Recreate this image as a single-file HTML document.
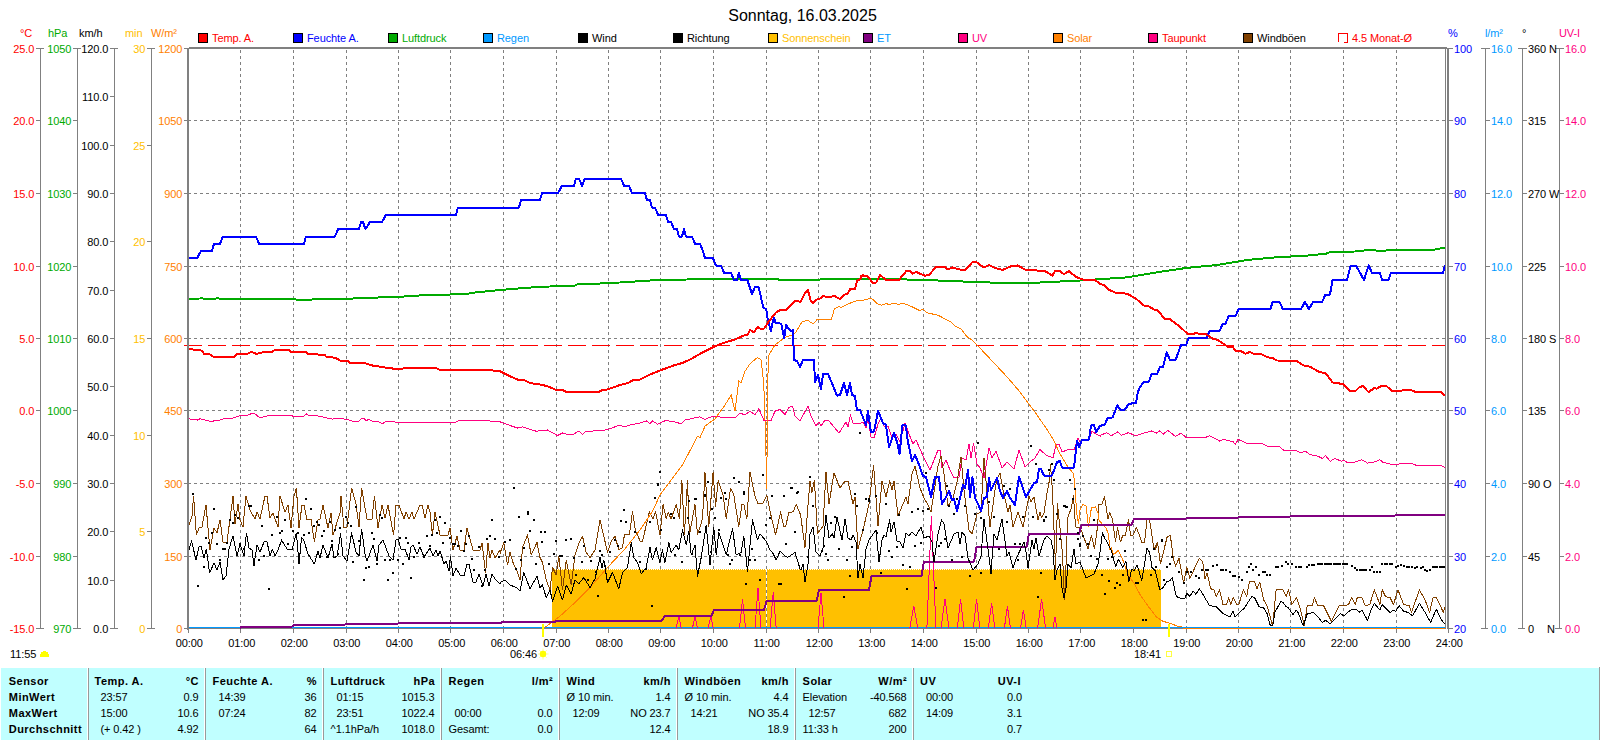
<!DOCTYPE html>
<html lang="de"><head><meta charset="utf-8"><title>Sonntag, 16.03.2025</title>
<style>html,body{margin:0;padding:0;background:#fff;overflow:hidden}svg{display:block}text{font-family:"Liberation Sans",Arial,sans-serif;font-size:11px;white-space:pre;letter-spacing:-0.1px}.h{font-size:16px;letter-spacing:0}.b{font-weight:bold;letter-spacing:0.45px}</style></head><body>
<svg width="1600" height="740" viewBox="0 0 1600 740">
<rect width="1600" height="740" fill="#fff"/>
<g shape-rendering="crispEdges">
<line x1="240.5" y1="50" x2="240.5" y2="628" stroke="#808080" stroke-width="1" stroke-dasharray="3,3"/>
<line x1="293.5" y1="50" x2="293.5" y2="628" stroke="#808080" stroke-width="1" stroke-dasharray="3,3"/>
<line x1="346.5" y1="50" x2="346.5" y2="628" stroke="#808080" stroke-width="1" stroke-dasharray="3,3"/>
<line x1="398.5" y1="50" x2="398.5" y2="628" stroke="#808080" stroke-width="1" stroke-dasharray="3,3"/>
<line x1="450.5" y1="50" x2="450.5" y2="628" stroke="#808080" stroke-width="1" stroke-dasharray="3,3"/>
<line x1="503.5" y1="50" x2="503.5" y2="628" stroke="#808080" stroke-width="1" stroke-dasharray="3,3"/>
<line x1="556.5" y1="50" x2="556.5" y2="628" stroke="#808080" stroke-width="1" stroke-dasharray="3,3"/>
<line x1="608.5" y1="50" x2="608.5" y2="628" stroke="#808080" stroke-width="1" stroke-dasharray="3,3"/>
<line x1="660.5" y1="50" x2="660.5" y2="628" stroke="#808080" stroke-width="1" stroke-dasharray="3,3"/>
<line x1="713.5" y1="50" x2="713.5" y2="628" stroke="#808080" stroke-width="1" stroke-dasharray="3,3"/>
<line x1="766.5" y1="50" x2="766.5" y2="628" stroke="#808080" stroke-width="1" stroke-dasharray="3,3"/>
<line x1="818.5" y1="50" x2="818.5" y2="628" stroke="#808080" stroke-width="1" stroke-dasharray="3,3"/>
<line x1="870.5" y1="50" x2="870.5" y2="628" stroke="#808080" stroke-width="1" stroke-dasharray="3,3"/>
<line x1="923.5" y1="50" x2="923.5" y2="628" stroke="#808080" stroke-width="1" stroke-dasharray="3,3"/>
<line x1="976.5" y1="50" x2="976.5" y2="628" stroke="#808080" stroke-width="1" stroke-dasharray="3,3"/>
<line x1="1028.5" y1="50" x2="1028.5" y2="628" stroke="#808080" stroke-width="1" stroke-dasharray="3,3"/>
<line x1="1080.5" y1="50" x2="1080.5" y2="628" stroke="#808080" stroke-width="1" stroke-dasharray="3,3"/>
<line x1="1133.5" y1="50" x2="1133.5" y2="628" stroke="#808080" stroke-width="1" stroke-dasharray="3,3"/>
<line x1="1186.5" y1="50" x2="1186.5" y2="628" stroke="#808080" stroke-width="1" stroke-dasharray="3,3"/>
<line x1="1238.5" y1="50" x2="1238.5" y2="628" stroke="#808080" stroke-width="1" stroke-dasharray="3,3"/>
<line x1="1290.5" y1="50" x2="1290.5" y2="628" stroke="#808080" stroke-width="1" stroke-dasharray="3,3"/>
<line x1="1343.5" y1="50" x2="1343.5" y2="628" stroke="#808080" stroke-width="1" stroke-dasharray="3,3"/>
<line x1="1396.5" y1="50" x2="1396.5" y2="628" stroke="#808080" stroke-width="1" stroke-dasharray="3,3"/>
<line x1="188" y1="120.5" x2="1445" y2="120.5" stroke="#808080" stroke-width="1" stroke-dasharray="3,3"/>
<line x1="188" y1="193.5" x2="1445" y2="193.5" stroke="#808080" stroke-width="1" stroke-dasharray="3,3"/>
<line x1="188" y1="266.5" x2="1445" y2="266.5" stroke="#808080" stroke-width="1" stroke-dasharray="3,3"/>
<line x1="188" y1="338.5" x2="1445" y2="338.5" stroke="#808080" stroke-width="1" stroke-dasharray="3,3"/>
<line x1="188" y1="410.5" x2="1445" y2="410.5" stroke="#808080" stroke-width="1" stroke-dasharray="3,3"/>
<line x1="188" y1="483.5" x2="1445" y2="483.5" stroke="#808080" stroke-width="1" stroke-dasharray="3,3"/>
<line x1="188" y1="556.5" x2="1445" y2="556.5" stroke="#808080" stroke-width="1" stroke-dasharray="3,3"/>
</g>
<g shape-rendering="crispEdges">
<rect x="552" y="570" width="214" height="58" fill="#FFC000"/>
<rect x="767" y="570" width="394" height="58" fill="#FFC000"/>
<line x1="552" y1="569.5" x2="766" y2="569.5" stroke="#FFC000" stroke-width="1" stroke-dasharray="1,1"/>
<line x1="767" y1="569.5" x2="1161" y2="569.5" stroke="#FFC000" stroke-width="1" stroke-dasharray="1,1"/>
</g>
<line x1="184" y1="345.5" x2="1445" y2="345.5" stroke="#FF0000" stroke-width="1" stroke-dasharray="18,6" shape-rendering="crispEdges"/>
<rect x="189" y="628" width="1257" height="1" fill="#808080"/>
<rect x="188" y="627" width="1258" height="1" fill="#0099FF"/>
<rect x="1183" y="628" width="263" height="1" fill="#FF8000"/>
<polyline points="188.8,418.8 197.5,420.0 200.0,418.8 212.5,421.8 215.0,420.0 220.0,420.0 225.0,418.2 232.5,418.2 240.0,415.8 246.2,415.8 252.5,413.2 255.0,413.8 260.0,418.0 265.0,416.2 272.5,415.5 291.2,415.5 293.8,416.5 303.8,416.2 306.8,413.8 308.8,415.5 317.5,415.8 325.0,417.5 332.5,419.2 336.2,418.2 346.2,419.2 352.5,421.2 358.8,421.2 361.2,418.8 363.8,418.2 366.2,420.8 368.8,419.2 372.5,421.2 378.8,422.0 382.5,423.8 386.2,421.2 400.0,422.5 400.0,422.0 437.5,422.0 440.0,423.0 455.0,422.5 458.8,420.8 487.5,420.8 500.0,421.8 510.0,425.5 517.5,428.0 522.5,426.8 530.0,429.5 536.2,431.2 547.5,430.0 557.5,435.5 562.5,433.0 567.5,434.5 573.8,434.0 578.8,431.2 582.5,434.2 586.2,431.2 600.0,430.8 607.5,429.5 620.0,425.0 623.8,427.0 630.0,425.0 640.0,423.0 646.2,420.8 650.0,423.8 652.5,420.8 657.5,424.2 665.0,420.8 672.5,421.2 681.2,423.8 685.0,420.0 700.0,416.8 705.0,419.5 712.5,416.2 725.0,417.5 735.0,418.0 740.0,413.0 745.0,415.0 750.0,411.2 755.0,415.0 758.8,408.8 763.8,420.0 771.2,420.0 775.0,411.2 780.0,409.5 785.0,414.5 788.8,407.5 792.5,406.2 795.0,416.0 800.0,421.0 808.0,406.0 811.0,416.0 816.0,426.0 819.0,422.0 821.0,426.0 825.0,420.0 829.0,421.0 839.0,433.0 846.0,422.0 848.0,427.0 850.4,415.0 853.0,423.0 860.0,423.6 863.0,422.0 866.0,427.6 868.0,418.0 871.0,437.0 874.0,438.0 878.0,424.0 881.0,418.0 884.0,426.0 888.0,426.0 892.0,438.0 896.0,434.0 900.0,442.0 905.0,423.0 909.0,434.0 913.0,444.0 916.0,440.0 924.0,458.0 930.0,470.0 938.0,450.0 940.0,450.0 942.0,468.0 946.0,460.0 950.0,470.0 954.0,478.0 959.0,477.0 962.0,458.0 966.0,460.0 969.0,444.0 971.0,458.0 973.6,443.0 977.0,464.0 980.0,468.0 984.0,478.0 989.0,448.0 992.0,458.0 996.0,451.0 1002.0,468.0 1007.0,462.0 1014.0,469.0 1019.0,450.0 1025.0,467.0 1030.0,462.0 1035.0,458.0 1040.0,449.6 1046.0,455.0 1053.0,458.0 1056.0,445.0 1059.0,444.0 1062.0,452.0 1068.0,449.6 1074.0,449.6 1078.0,438.0 1080.0,442.0 1083.0,439.0 1089.0,439.6 1092.0,431.0 1096.0,434.0 1100.0,436.0 1100.0,435.4 1106.8,432.7 1111.3,435.8 1117.6,432.0 1121.4,435.4 1128.2,432.7 1136.1,435.8 1145.1,432.7 1151.9,430.9 1156.4,433.1 1159.8,430.9 1163.2,434.2 1167.7,430.4 1175.6,436.5 1180.8,433.1 1185.8,437.2 1206.1,437.2 1209.5,435.8 1219.6,441.0 1223.0,439.4 1233.2,441.7 1235.4,444.4 1238.1,439.4 1246.7,443.3 1262.5,443.7 1267.0,446.2 1279.5,446.7 1284.0,450.5 1296.4,450.5 1300.9,453.0 1305.4,451.2 1309.9,454.6 1316.7,455.7 1322.3,458.4 1325.7,455.7 1330.2,461.3 1334.8,458.4 1341.5,461.3 1343.8,460.2 1347.2,462.5 1355.1,462.0 1361.9,459.8 1367.5,463.1 1374.3,462.0 1379.9,459.8 1383.3,462.5 1393.5,464.7 1402.5,463.6 1411.5,463.6 1416.0,465.2 1427.3,465.8 1434.1,465.2 1440.9,465.4 1445.4,467.7" fill="none" stroke="#FF0080" stroke-width="1" shape-rendering="crispEdges" />
<polyline points="188.0,528.0 192.0,516.0 193.6,496.0 196.4,535.0 199.0,528.0 202.0,527.0 206.0,505.0 210.0,550.0 214.0,528.0 217.0,533.0 220.0,520.0 223.0,542.0 227.0,542.0 233.0,496.0 235.0,524.0 238.0,504.0 240.0,520.0 243.0,527.0 246.0,496.0 250.0,510.0 255.0,519.0 257.0,512.0 260.0,519.0 265.0,496.0 267.0,496.0 270.0,518.0 273.0,513.0 278.0,527.0 280.0,496.0 285.0,512.0 288.0,505.0 291.0,528.0 294.0,496.0 296.4,488.0 299.0,528.0 302.0,505.0 304.0,505.0 307.0,520.0 311.0,519.0 314.4,542.0 318.0,520.0 320.0,519.0 323.0,505.0 328.0,528.0 331.0,513.0 333.0,535.0 340.0,513.0 341.0,496.0 344.0,528.0 347.0,527.0 351.6,488.0 356.0,504.0 359.0,527.0 361.6,488.0 367.0,519.0 372.0,519.0 374.4,496.0 378.0,528.0 382.0,505.0 385.0,518.0 388.0,505.0 393.6,535.0 396.0,505.0 399.0,505.0 404.0,519.0 406.0,512.0 409.0,519.0 412.0,512.0 414.0,519.0 420.0,505.0 422.0,505.0 425.0,518.0 428.0,505.0 430.0,512.0 432.4,535.0 435.0,512.0 440.0,535.0 448.0,535.0 450.0,528.0 453.0,550.0 457.0,536.0 460.0,550.0 464.0,550.0 467.0,528.0 473.0,550.0 480.0,550.0 482.0,543.0 485.6,573.0 488.0,543.0 490.0,558.0 492.0,550.0 495.0,558.0 500.0,550.0 500.0,553.8 503.8,542.5 507.5,565.0 510.0,552.5 513.8,565.0 516.2,568.8 520.0,580.0 522.5,547.5 527.5,535.0 531.2,555.0 537.0,542.5 540.0,557.5 542.5,562.5 546.2,580.0 550.0,590.0 552.5,567.5 556.2,575.0 558.8,556.2 562.5,590.0 566.2,560.0 571.2,585.0 575.0,555.0 578.8,543.8 582.5,536.2 586.2,552.5 590.0,557.5 595.0,550.0 600.0,520.0 603.8,536.2 607.5,552.5 611.2,541.2 615.0,536.2 618.8,550.0 622.5,547.5 624.4,535.0 629.4,534.4 632.5,511.9 635.6,531.2 640.6,541.9 642.5,541.2 649.4,511.9 653.1,518.8 655.6,511.9 660.0,535.0 663.1,504.4 666.2,518.8 668.1,512.5 671.2,518.8 676.2,504.4 679.4,518.8 681.9,480.6 684.4,535.0 687.5,480.6 689.4,535.0 695.0,504.4 697.5,535.0 702.5,518.8 705.0,472.5 708.8,526.9 713.1,471.9 715.6,506.2 718.1,480.6 723.1,495.0 726.2,518.8 730.6,488.1 733.8,495.0 738.8,526.9 741.9,504.4 743.8,504.4 746.9,518.8 750.0,472.5 755.0,496.2 758.1,503.8 762.5,503.8 766.9,495.6 770.0,511.2 775.6,535.0 780.6,511.9 783.8,526.9 785.6,526.9 788.8,512.5 793.1,511.9 796.2,504.4 800.6,515.0 805.0,547.5 807.5,511.2 810.0,480.6 811.9,492.5 814.4,480.6 817.5,533.8 823.0,526.0 826.0,472.0 829.0,504.0 834.0,473.0 840.0,488.0 845.0,481.0 848.0,481.0 853.0,504.0 855.0,497.0 858.0,549.0 864.0,526.0 869.0,504.0 873.6,465.0 878.0,526.0 882.0,481.0 886.0,497.0 889.6,481.0 892.0,490.0 894.0,481.0 898.0,516.0 903.0,504.0 906.0,497.0 908.0,504.0 912.0,474.0 915.0,466.0 920.0,488.0 924.0,498.0 928.0,505.0 931.0,512.0 938.0,466.0 941.0,456.0 944.0,474.0 948.0,506.0 953.0,498.0 957.0,482.0 961.0,457.0 964.0,490.0 969.0,530.0 972.0,534.0 977.0,514.0 981.0,512.0 984.0,458.0 990.0,527.0 995.0,490.0 997.0,479.0 1000.0,473.0 1003.0,490.0 1008.0,512.0 1010.0,505.0 1013.0,527.0 1018.0,512.0 1023.0,527.0 1029.0,496.0 1031.0,502.0 1034.0,497.0 1038.0,520.0 1040.0,512.0 1041.5,518.0 1044.0,513.0 1047.0,493.0 1049.5,480.0 1050.5,465.0 1052.0,485.0 1053.0,505.0 1055.0,554.0 1055.5,570.0 1057.5,504.0 1060.0,528.0 1062.5,554.0 1064.5,600.0 1066.5,554.0 1067.5,518.0 1071.0,509.0 1073.5,496.0 1075.5,527.0 1079.0,527.5 1082.0,532.0 1088.0,549.0 1091.5,535.5 1094.5,549.0 1097.5,527.0 1099.0,504.5 1102.0,504.0 1104.5,496.5 1108.0,519.0 1109.5,512.5 1112.5,519.0 1115.5,542.0 1117.5,527.5 1120.5,542.0 1122.5,536.0 1125.5,535.0 1128.5,519.5 1130.5,535.0 1133.0,535.0 1136.5,527.5 1142.0,542.5 1144.5,542.5 1147.0,519.5 1149.5,519.5 1154.0,549.0 1157.5,542.5 1155.3,549.2 1157.6,543.5 1160.5,563.9 1167.3,536.3 1170.4,535.6 1173.4,559.3 1175.6,566.1 1179.0,558.2 1183.5,583.0 1186.9,567.2 1189.8,578.5 1199.3,558.2 1202.7,561.6 1205.0,578.5 1207.2,572.9 1210.6,588.7 1214.0,589.8 1216.3,596.6 1219.6,589.8 1223.0,604.5 1226.4,604.5 1228.7,597.7 1230.9,604.5 1233.2,597.7 1236.6,604.5 1238.8,604.5 1243.3,589.8 1246.7,596.6 1249.4,581.9 1254.6,581.9 1256.9,588.7 1259.8,582.4 1263.7,600.0 1267.0,605.6 1272.7,625.9 1276.1,589.8 1282.8,589.8 1286.2,596.6 1288.5,589.8 1291.9,604.5 1296.4,597.7 1299.8,606.7 1304.3,625.9 1307.2,605.6 1312.2,605.6 1314.4,597.7 1317.8,605.6 1323.5,605.6 1331.4,621.4 1339.3,605.6 1348.3,604.9 1351.7,597.7 1355.1,604.5 1357.3,597.7 1361.9,597.7 1365.2,605.6 1369.8,604.5 1374.3,589.8 1379.9,604.5 1382.2,589.8 1385.6,596.6 1390.1,597.7 1393.5,604.5 1398.0,589.8 1403.6,604.5 1409.3,605.6 1411.5,612.4 1419.4,589.8 1425.1,600.0 1429.6,612.4 1433.0,597.7 1436.3,597.3 1440.9,606.7 1443.1,612.4 1445.4,605.6" fill="none" stroke="#804000" stroke-width="1" shape-rendering="crispEdges" stroke-linejoin="round"/>
<polyline points="543.0,628.0 546.0,626.5 548.8,624.5 560.0,616.2 575.0,602.5 590.0,587.5 607.5,567.5 625.0,548.8 640.0,530.0 652.5,511.2 660.0,495.0 682.5,465.0 697.5,436.2 700.0,437.5 705.0,426.2 715.0,418.8 725.0,405.0 731.2,395.0 735.0,411.2 738.8,381.2 741.2,382.5 745.0,371.2 750.0,363.8 757.5,357.5 761.2,360.0 763.8,385.0 765.5,435.0 766.8,488.8 767.5,385.0 768.8,355.0 775.0,345.0 785.0,337.5 792.7,334.6 795.5,332.7 802.1,321.7 807.8,320.4 813.1,323.8 817.3,319.4 831.5,319.1 834.3,309.0 839.0,306.2 840.9,307.7 849.4,303.4 857.0,300.5 860.8,300.9 870.2,298.3 873.1,299.6 876.8,303.4 881.6,305.3 886.3,303.4 889.1,304.7 892.9,303.4 898.6,304.3 903.3,303.4 909.9,305.8 919.4,310.4 923.2,309.6 927.0,312.8 938.3,315.3 945.9,319.4 951.6,322.3 955.3,326.1 961.0,328.9 966.7,336.5 972.4,340.2 977.1,345.0 977.0,345.0 995.0,364.0 1008.0,378.0 1020.0,392.0 1037.0,415.0 1046.0,428.0 1053.0,439.0 1060.0,454.0 1068.0,467.0 1073.0,473.0 1074.5,480.0 1075.0,490.0 1077.0,515.0 1078.5,524.0 1080.0,510.0 1083.0,504.5 1086.0,506.0 1088.5,526.5 1091.5,507.5 1095.5,507.0 1098.0,513.0 1099.0,520.0 1102.0,524.0 1106.0,528.0 1108.5,534.0 1110.0,550.0 1111.3,548.1 1113.5,554.8 1118.1,550.3 1122.6,559.3 1128.2,575.1 1133.9,583.0 1140.6,595.5 1148.5,606.7 1156.4,616.9 1163.2,621.4 1170.0,623.2 1176.7,625.9 1182.4,627.1" fill="none" stroke="#FF8000" stroke-width="1" shape-rendering="crispEdges" />
<polyline points="676.2,628 678.8,616 681.2,628" fill="none" stroke="#FF0080" stroke-width="1" shape-rendering="crispEdges"/>
<polyline points="692.5,628 695.0,616 697.5,628" fill="none" stroke="#FF0080" stroke-width="1" shape-rendering="crispEdges"/>
<polyline points="708.2,628 710.8,616 713.2,628" fill="none" stroke="#FF0080" stroke-width="1" shape-rendering="crispEdges"/>
<polyline points="739.5,628 742.5,599.5 745.5,628" fill="none" stroke="#FF0080" stroke-width="1" shape-rendering="crispEdges"/>
<polyline points="755.0,628 758.0,588 761.0,628" fill="none" stroke="#FF0080" stroke-width="1" shape-rendering="crispEdges"/>
<polyline points="770.2,628 773.2,592.5 776.2,628" fill="none" stroke="#FF0080" stroke-width="1" shape-rendering="crispEdges"/>
<polyline points="818.0,628 821.0,593 824.0,628" fill="none" stroke="#FF0080" stroke-width="1" shape-rendering="crispEdges"/>
<polyline points="909.8,628 913.8,606 917.8,628" fill="none" stroke="#FF0080" stroke-width="1" shape-rendering="crispEdges"/>
<polyline points="926.9,628 931.4,516 935.9,628" fill="none" stroke="#FF0080" stroke-width="1" shape-rendering="crispEdges"/>
<polyline points="941.0,628 945.0,599 949.0,628" fill="none" stroke="#FF0080" stroke-width="1" shape-rendering="crispEdges"/>
<polyline points="957.4,628 960.6,599 963.8,628" fill="none" stroke="#FF0080" stroke-width="1" shape-rendering="crispEdges"/>
<polyline points="973.4,628 976.6,599 979.8,628" fill="none" stroke="#FF0080" stroke-width="1" shape-rendering="crispEdges"/>
<polyline points="988.4,628 991.6,603 994.8,628" fill="none" stroke="#FF0080" stroke-width="1" shape-rendering="crispEdges"/>
<polyline points="1004.4,628 1007.4,606 1010.4,628" fill="none" stroke="#FF0080" stroke-width="1" shape-rendering="crispEdges"/>
<polyline points="1020.6,628 1023.4,610 1026.2,628" fill="none" stroke="#FF0080" stroke-width="1" shape-rendering="crispEdges"/>
<polyline points="1037.6,628 1041.6,599 1045.6,628" fill="none" stroke="#FF0080" stroke-width="1" shape-rendering="crispEdges"/>
<polyline points="1053.0,628 1055.0,617 1057.0,628" fill="none" stroke="#FF0080" stroke-width="1" shape-rendering="crispEdges"/>
<polyline points="240.0,628.0 241.5,626.8 291.5,626.8 294.0,625.0 344.0,625.0 346.5,623.8 396.5,623.8 399.0,623.4 449.0,623.4 451.5,622.5 501.5,622.5 504.0,622.0 554.0,622.0 556.5,621.2 606.5,621.2 609.0,620.5 662.0,620.5 664.5,616.2 711.5,616.2 714.0,610.0 764.0,610.0 766.5,601.2 816.5,601.2 819.0,590.0 869.0,590.0 871.5,576.0 921.5,576.0 924.0,561.6 974.0,561.6 976.5,547.4 1026.5,547.4 1029.0,533.8 1079.0,533.8 1081.5,525.2 1131.5,525.2 1134.0,519.0 1184.0,519.0 1186.5,518.3 1236.5,518.3 1239.0,517.0 1289.0,517.0 1291.5,516.0 1341.5,516.0 1344.0,516.0 1394.0,516.0 1396.5,515.0 1446.0,515.0" fill="none" stroke="#800080" stroke-width="2" shape-rendering="crispEdges" stroke-linejoin="round"/>
<polyline points="188.0,553.0 191.6,541.0 196.0,560.0 199.0,547.0 201.0,546.0 204.0,558.0 206.4,549.0 209.6,573.0 214.0,563.0 217.0,570.0 220.0,562.0 223.0,580.0 226.0,576.0 229.0,549.0 233.0,536.0 237.0,556.0 240.0,544.0 244.0,556.0 246.4,533.0 249.0,548.0 252.0,550.0 254.0,565.0 257.0,545.0 260.0,552.0 264.0,542.0 267.0,541.6 270.0,556.0 272.4,549.0 275.0,556.0 278.0,550.0 281.6,540.0 287.0,549.0 292.0,550.0 296.4,533.0 299.0,564.0 301.6,537.0 304.0,541.0 308.0,554.0 314.4,564.0 318.0,551.0 320.0,558.0 323.0,545.0 328.0,558.0 332.0,544.0 334.0,558.0 337.0,556.0 340.6,534.0 343.0,556.0 347.0,561.0 351.6,533.0 356.0,552.0 359.0,556.0 361.6,529.0 365.0,554.0 367.0,561.0 373.0,545.0 377.0,561.0 379.0,545.0 383.0,540.0 389.0,556.0 393.0,560.0 396.0,540.0 398.0,539.0 401.0,549.0 405.0,549.0 409.0,560.0 411.0,547.0 413.0,545.0 417.0,554.0 420.0,547.0 424.0,557.0 430.0,548.0 433.0,556.0 436.0,550.0 438.0,556.0 440.0,551.0 444.0,564.0 446.0,561.0 449.0,571.0 450.4,556.0 453.0,576.0 456.0,568.0 460.0,575.0 464.0,576.0 467.0,564.0 469.0,564.0 473.0,582.0 476.0,582.0 479.0,574.0 483.0,586.0 486.0,574.0 489.0,586.0 492.0,574.0 495.0,579.0 500.0,584.0 500.0,582.5 505.0,580.0 510.0,585.0 516.2,587.5 520.0,591.2 523.8,572.5 530.0,588.8 537.0,576.2 540.0,587.5 542.5,585.0 546.2,597.5 550.0,590.0 552.5,601.2 557.5,586.2 562.5,600.0 566.2,585.0 571.2,593.8 575.0,580.0 578.8,583.8 583.8,577.5 590.0,587.5 595.0,578.8 600.0,557.5 602.0,567.5 603.8,560.0 607.5,582.5 612.5,572.5 618.8,588.8 622.5,572.5 627.5,567.5 631.2,542.5 633.8,557.5 637.5,562.5 641.2,573.8 646.2,567.5 650.0,547.5 652.5,560.0 656.2,547.5 660.0,562.5 662.5,550.0 665.0,562.5 668.8,542.5 671.2,552.5 676.2,545.0 678.8,550.0 682.5,530.0 686.2,545.0 688.8,531.2 691.2,555.0 695.0,545.0 697.5,576.2 701.2,557.5 706.2,525.0 710.0,565.0 713.8,527.5 716.2,555.0 718.8,532.5 726.2,555.0 732.5,528.8 736.2,555.0 741.2,552.5 743.8,536.2 747.5,571.2 752.5,520.0 757.5,540.0 760.0,533.8 766.2,541.2 770.0,550.0 772.5,552.5 776.2,560.0 780.0,551.2 783.8,555.0 787.5,557.5 795.0,552.5 800.0,568.8 801.0,570.0 803.0,564.0 805.0,582.0 808.0,564.0 810.0,534.0 813.0,527.0 816.0,552.0 820.0,556.0 823.0,548.0 826.0,515.0 829.0,538.0 832.4,534.0 834.0,538.0 837.0,517.0 842.0,540.0 845.0,519.0 848.0,538.0 851.0,540.0 853.0,535.0 856.0,542.0 858.0,578.0 860.0,564.0 863.0,578.0 866.0,549.0 869.0,540.0 876.0,530.0 879.0,562.0 882.0,540.0 884.0,535.0 886.0,537.0 889.6,520.0 891.0,532.0 894.0,522.0 897.0,541.0 900.0,542.0 903.0,548.0 906.0,533.0 909.0,536.0 912.0,532.0 916.0,536.0 921.0,527.0 924.0,538.0 929.0,536.0 932.0,542.0 934.0,562.0 938.0,534.0 941.6,520.0 944.0,524.0 948.0,548.0 954.0,534.0 958.0,532.0 960.0,544.0 962.0,532.0 965.0,536.0 968.0,558.0 973.0,570.0 978.0,564.0 981.0,556.0 984.0,519.0 991.0,572.0 994.0,534.0 997.0,540.0 1002.0,519.0 1007.0,556.0 1009.0,552.0 1013.0,568.0 1016.0,559.0 1024.0,542.0 1026.0,552.0 1028.0,568.0 1032.0,540.0 1034.0,549.0 1036.0,538.0 1039.0,556.0 1044.0,540.0 1047.0,536.0 1051.0,540.0 1053.0,549.0 1055.0,580.0 1057.0,570.0 1060.0,564.0 1062.0,588.0 1064.0,598.0 1066.0,588.0 1068.0,564.0 1071.0,568.0 1074.0,549.0 1076.0,564.0 1080.0,562.0 1086.0,578.0 1094.0,574.0 1098.0,564.0 1100.0,552.0 1102.5,532.5 1105.0,539.0 1106.8,541.3 1111.3,550.3 1113.5,559.3 1115.8,566.1 1118.5,559.3 1122.6,567.2 1126.0,561.6 1128.9,581.9 1131.6,569.5 1133.9,570.6 1137.2,565.0 1141.8,580.8 1147.0,548.1 1149.7,552.6 1151.9,567.2 1155.3,570.6 1159.8,589.8 1163.2,587.6 1166.6,581.9 1170.0,580.8 1172.2,577.4 1175.6,594.3 1177.9,597.7 1184.7,598.8 1186.9,593.2 1189.8,596.6 1193.0,590.9 1195.9,594.3 1199.3,588.7 1201.6,592.1 1209.5,605.6 1216.3,606.7 1223.0,613.5 1229.8,616.9 1233.2,611.3 1235.0,616.9 1244.5,607.9 1251.7,596.6 1254.6,597.7 1259.1,606.7 1263.7,607.9 1267.0,613.5 1270.4,625.9 1272.7,625.9 1274.9,612.4 1280.6,601.8 1282.8,602.2 1286.2,606.7 1288.5,607.9 1293.0,614.7 1296.4,610.1 1298.6,613.5 1303.2,625.9 1307.2,614.0 1313.3,612.4 1319.0,618.0 1322.3,622.6 1325.7,620.3 1330.2,623.7 1340.4,613.5 1343.8,615.8 1350.6,610.1 1356.2,609.0 1359.1,612.4 1361.9,610.1 1367.5,620.3 1370.9,610.1 1374.3,603.4 1379.9,610.1 1382.2,604.5 1390.1,612.4 1393.5,610.1 1395.7,611.3 1399.1,605.6 1403.6,611.3 1408.1,612.4 1412.6,615.8 1419.4,603.4 1425.1,612.4 1430.7,622.6 1436.3,609.0 1440.9,619.2 1445.4,624.8" fill="none" stroke="#000" stroke-width="1" shape-rendering="crispEdges" stroke-linejoin="round"/>
<g fill="#000" shape-rendering="crispEdges"><rect x="192" y="493" width="2" height="2"/><rect x="213" y="508" width="2" height="2"/><rect x="197" y="585" width="2" height="2"/><rect x="203" y="566" width="2" height="2"/><rect x="205" y="537" width="2" height="2"/><rect x="208" y="542" width="2" height="2"/><rect x="211" y="532" width="2" height="2"/><rect x="216" y="543" width="2" height="2"/><rect x="219" y="559" width="2" height="2"/><rect x="222" y="548" width="2" height="2"/><rect x="224" y="548" width="2" height="2"/><rect x="226" y="542" width="2" height="2"/><rect x="229" y="519" width="2" height="2"/><rect x="232" y="522" width="2" height="2"/><rect x="234" y="514" width="2" height="2"/><rect x="237" y="517" width="2" height="2"/><rect x="239" y="543" width="2" height="2"/><rect x="243" y="548" width="2" height="2"/><rect x="248" y="505" width="2" height="2"/><rect x="250" y="505" width="2" height="2"/><rect x="253" y="564" width="2" height="2"/><rect x="258" y="559" width="2" height="2"/><rect x="261" y="525" width="2" height="2"/><rect x="263" y="555" width="2" height="2"/><rect x="268" y="588" width="2" height="2"/><rect x="271" y="534" width="2" height="2"/><rect x="276" y="516" width="2" height="2"/><rect x="279" y="532" width="2" height="2"/><rect x="281" y="530" width="2" height="2"/><rect x="284" y="519" width="2" height="2"/><rect x="287" y="543" width="2" height="2"/><rect x="292" y="530" width="2" height="2"/><rect x="297" y="532" width="2" height="2"/><rect x="303" y="534" width="2" height="2"/><rect x="305" y="498" width="2" height="2"/><rect x="308" y="532" width="2" height="2"/><rect x="310" y="508" width="2" height="2"/><rect x="313" y="525" width="2" height="2"/><rect x="316" y="521" width="2" height="2"/><rect x="318" y="524" width="2" height="2"/><rect x="321" y="535" width="2" height="2"/><rect x="323" y="530" width="2" height="2"/><rect x="326" y="556" width="2" height="2"/><rect x="329" y="521" width="2" height="2"/><rect x="331" y="540" width="2" height="2"/><rect x="334" y="529" width="2" height="2"/><rect x="337" y="553" width="2" height="2"/><rect x="339" y="527" width="2" height="2"/><rect x="345" y="516" width="2" height="2"/><rect x="347" y="522" width="2" height="2"/><rect x="350" y="525" width="2" height="2"/><rect x="352" y="561" width="2" height="2"/><rect x="355" y="506" width="2" height="2"/><rect x="358" y="540" width="2" height="2"/><rect x="361" y="532" width="2" height="2"/><rect x="363" y="579" width="2" height="2"/><rect x="365" y="567" width="2" height="2"/><rect x="368" y="566" width="2" height="2"/><rect x="371" y="532" width="2" height="2"/><rect x="373" y="538" width="2" height="2"/><rect x="376" y="563" width="2" height="2"/><rect x="379" y="514" width="2" height="2"/><rect x="381" y="517" width="2" height="2"/><rect x="384" y="559" width="2" height="2"/><rect x="387" y="579" width="2" height="2"/><rect x="389" y="559" width="2" height="2"/><rect x="392" y="572" width="2" height="2"/><rect x="397" y="559" width="2" height="2"/><rect x="399" y="537" width="2" height="2"/><rect x="402" y="563" width="2" height="2"/><rect x="405" y="537" width="2" height="2"/><rect x="407" y="542" width="2" height="2"/><rect x="410" y="577" width="2" height="2"/><rect x="413" y="556" width="2" height="2"/><rect x="418" y="542" width="2" height="2"/><rect x="423" y="556" width="2" height="2"/><rect x="426" y="535" width="2" height="2"/><rect x="429" y="545" width="2" height="2"/><rect x="431" y="534" width="2" height="2"/><rect x="434" y="519" width="2" height="2"/><rect x="436" y="532" width="2" height="2"/><rect x="439" y="516" width="2" height="2"/><rect x="442" y="542" width="2" height="2"/><rect x="444" y="522" width="2" height="2"/><rect x="449" y="537" width="2" height="2"/><rect x="452" y="543" width="2" height="2"/><rect x="454" y="543" width="2" height="2"/><rect x="457" y="545" width="2" height="2"/><rect x="460" y="530" width="2" height="2"/><rect x="463" y="550" width="2" height="2"/><rect x="465" y="543" width="2" height="2"/><rect x="468" y="535" width="2" height="2"/><rect x="471" y="558" width="2" height="2"/><rect x="473" y="569" width="2" height="2"/><rect x="478" y="546" width="2" height="2"/><rect x="481" y="585" width="2" height="2"/><rect x="484" y="569" width="2" height="2"/><rect x="486" y="538" width="2" height="2"/><rect x="489" y="535" width="2" height="2"/><rect x="491" y="519" width="2" height="2"/><rect x="494" y="538" width="2" height="2"/><rect x="498" y="556" width="2" height="2"/><rect x="504" y="541" width="2" height="2"/><rect x="509" y="539" width="2" height="2"/><rect x="513" y="487" width="2" height="2"/><rect x="515" y="568" width="2" height="2"/><rect x="518" y="516" width="2" height="2"/><rect x="520" y="559" width="2" height="2"/><rect x="523" y="547" width="2" height="2"/><rect x="527" y="511" width="2" height="2"/><rect x="529" y="530" width="2" height="2"/><rect x="533" y="519" width="2" height="2"/><rect x="535" y="563" width="2" height="2"/><rect x="540" y="531" width="2" height="2"/><rect x="541" y="541" width="2" height="2"/><rect x="544" y="531" width="2" height="2"/><rect x="548" y="563" width="2" height="2"/><rect x="553" y="553" width="2" height="2"/><rect x="555" y="540" width="2" height="2"/><rect x="559" y="555" width="2" height="2"/><rect x="561" y="555" width="2" height="2"/><rect x="565" y="539" width="2" height="2"/><rect x="570" y="538" width="2" height="2"/><rect x="573" y="557" width="2" height="2"/><rect x="575" y="574" width="2" height="2"/><rect x="581" y="561" width="2" height="2"/><rect x="583" y="545" width="2" height="2"/><rect x="587" y="579" width="2" height="2"/><rect x="590" y="560" width="2" height="2"/><rect x="595" y="571" width="2" height="2"/><rect x="597" y="595" width="2" height="2"/><rect x="599" y="550" width="2" height="2"/><rect x="601" y="554" width="2" height="2"/><rect x="604" y="565" width="2" height="2"/><rect x="609" y="551" width="2" height="2"/><rect x="614" y="539" width="2" height="2"/><rect x="617" y="545" width="2" height="2"/><rect x="620" y="520" width="2" height="2"/><rect x="623" y="509" width="2" height="2"/><rect x="625" y="521" width="2" height="2"/><rect x="634" y="531" width="2" height="2"/><rect x="639" y="561" width="2" height="2"/><rect x="645" y="568" width="2" height="2"/><rect x="649" y="521" width="2" height="2"/><rect x="651" y="605" width="2" height="2"/><rect x="654" y="497" width="2" height="2"/><rect x="657" y="483" width="2" height="2"/><rect x="660" y="529" width="2" height="2"/><rect x="670" y="513" width="2" height="2"/><rect x="673" y="517" width="2" height="2"/><rect x="674" y="554" width="2" height="2"/><rect x="681" y="561" width="2" height="2"/><rect x="687" y="517" width="2" height="2"/><rect x="691" y="553" width="2" height="2"/><rect x="695" y="498" width="2" height="2"/><rect x="699" y="531" width="2" height="2"/><rect x="704" y="494" width="2" height="2"/><rect x="707" y="481" width="2" height="2"/><rect x="710" y="551" width="2" height="2"/><rect x="714" y="517" width="2" height="2"/><rect x="718" y="529" width="2" height="2"/><rect x="720" y="497" width="2" height="2"/><rect x="725" y="498" width="2" height="2"/><rect x="727" y="554" width="2" height="2"/><rect x="729" y="563" width="2" height="2"/><rect x="731" y="559" width="2" height="2"/><rect x="738" y="481" width="2" height="2"/><rect x="739" y="554" width="2" height="2"/><rect x="743" y="491" width="2" height="2"/><rect x="745" y="583" width="2" height="2"/><rect x="749" y="559" width="2" height="2"/><rect x="751" y="548" width="2" height="2"/><rect x="754" y="559" width="2" height="2"/><rect x="759" y="579" width="2" height="2"/><rect x="765" y="524" width="2" height="2"/><rect x="769" y="517" width="2" height="2"/><rect x="771" y="495" width="2" height="2"/><rect x="778" y="583" width="2" height="2"/><rect x="780" y="583" width="2" height="2"/><rect x="785" y="543" width="2" height="2"/><rect x="790" y="487" width="2" height="2"/><rect x="794" y="531" width="2" height="2"/><rect x="797" y="491" width="2" height="2"/><rect x="659" y="471" width="2" height="2"/><rect x="657" y="484" width="2" height="2"/><rect x="654" y="497" width="2" height="2"/><rect x="623" y="509" width="2" height="2"/><rect x="513" y="487" width="2" height="2"/><rect x="527" y="513" width="2" height="2"/><rect x="518" y="516" width="2" height="2"/><rect x="439" y="516" width="2" height="2"/><rect x="733" y="477" width="2" height="2"/><rect x="738" y="481" width="2" height="2"/><rect x="762" y="474" width="2" height="2"/><rect x="724" y="492" width="2" height="2"/><rect x="743" y="493" width="2" height="2"/><rect x="704" y="495" width="2" height="2"/><rect x="694" y="498" width="2" height="2"/><rect x="688" y="500" width="2" height="2"/><rect x="720" y="497" width="2" height="2"/><rect x="711" y="508" width="2" height="2"/><rect x="771" y="495" width="2" height="2"/><rect x="783" y="495" width="2" height="2"/><rect x="791" y="487" width="2" height="2"/><rect x="796" y="492" width="2" height="2"/><rect x="807" y="556" width="2" height="2"/><rect x="809" y="476" width="2" height="2"/><rect x="812" y="505" width="2" height="2"/><rect x="821" y="550" width="2" height="2"/><rect x="823" y="545" width="2" height="2"/><rect x="825" y="553" width="2" height="2"/><rect x="827" y="559" width="2" height="2"/><rect x="830" y="522" width="2" height="2"/><rect x="834" y="516" width="2" height="2"/><rect x="838" y="548" width="2" height="2"/><rect x="846" y="559" width="2" height="2"/><rect x="851" y="546" width="2" height="2"/><rect x="854" y="493" width="2" height="2"/><rect x="856" y="505" width="2" height="2"/><rect x="862" y="529" width="2" height="2"/><rect x="865" y="498" width="2" height="2"/><rect x="868" y="498" width="2" height="2"/><rect x="868" y="500" width="2" height="2"/><rect x="875" y="495" width="2" height="2"/><rect x="876" y="532" width="2" height="2"/><rect x="880" y="572" width="2" height="2"/><rect x="885" y="503" width="2" height="2"/><rect x="888" y="550" width="2" height="2"/><rect x="891" y="556" width="2" height="2"/><rect x="896" y="546" width="2" height="2"/><rect x="898" y="514" width="2" height="2"/><rect x="902" y="564" width="2" height="2"/><rect x="909" y="566" width="2" height="2"/><rect x="911" y="511" width="2" height="2"/><rect x="914" y="545" width="2" height="2"/><rect x="917" y="508" width="2" height="2"/><rect x="920" y="542" width="2" height="2"/><rect x="922" y="510" width="2" height="2"/><rect x="925" y="472" width="2" height="2"/><rect x="927" y="508" width="2" height="2"/><rect x="935" y="587" width="2" height="2"/><rect x="938" y="545" width="2" height="2"/><rect x="940" y="542" width="2" height="2"/><rect x="944" y="538" width="2" height="2"/><rect x="946" y="485" width="2" height="2"/><rect x="948" y="505" width="2" height="2"/><rect x="951" y="559" width="2" height="2"/><rect x="953" y="513" width="2" height="2"/><rect x="956" y="498" width="2" height="2"/><rect x="961" y="556" width="2" height="2"/><rect x="964" y="505" width="2" height="2"/><rect x="969" y="575" width="2" height="2"/><rect x="974" y="513" width="2" height="2"/><rect x="977" y="442" width="2" height="2"/><rect x="980" y="517" width="2" height="2"/><rect x="980" y="572" width="2" height="2"/><rect x="988" y="501" width="2" height="2"/><rect x="990" y="571" width="2" height="2"/><rect x="993" y="516" width="2" height="2"/><rect x="998" y="548" width="2" height="2"/><rect x="1003" y="485" width="2" height="2"/><rect x="1006" y="521" width="2" height="2"/><rect x="1009" y="488" width="2" height="2"/><rect x="1014" y="543" width="2" height="2"/><rect x="1017" y="559" width="2" height="2"/><rect x="1019" y="543" width="2" height="2"/><rect x="1022" y="516" width="2" height="2"/><rect x="1030" y="445" width="2" height="2"/><rect x="1032" y="516" width="2" height="2"/><rect x="1035" y="463" width="2" height="2"/><rect x="780" y="583" width="2" height="2"/><rect x="843" y="596" width="2" height="2"/><rect x="849" y="575" width="2" height="2"/><rect x="880" y="572" width="2" height="2"/><rect x="906" y="588" width="2" height="2"/><rect x="935" y="587" width="2" height="2"/><rect x="969" y="575" width="2" height="2"/><rect x="980" y="572" width="2" height="2"/><rect x="990" y="572" width="2" height="2"/><rect x="1037" y="596" width="2" height="2"/><rect x="1040" y="572" width="2" height="2"/><rect x="859" y="432" width="2" height="2"/><rect x="977" y="442" width="2" height="2"/><rect x="1030" y="445" width="2" height="2"/><rect x="1035" y="463" width="2" height="2"/><rect x="1048" y="469" width="2" height="2"/><rect x="1051" y="463" width="2" height="2"/><rect x="925" y="472" width="2" height="2"/><rect x="809" y="476" width="2" height="2"/><rect x="1043" y="519" width="2" height="2"/><rect x="1045" y="516" width="2" height="2"/><rect x="1053" y="479" width="2" height="2"/><rect x="1056" y="513" width="2" height="2"/><rect x="1059" y="538" width="2" height="2"/><rect x="1063" y="505" width="2" height="2"/><rect x="1065" y="506" width="2" height="2"/><rect x="1069" y="479" width="2" height="2"/><rect x="1072" y="498" width="2" height="2"/><rect x="1074" y="488" width="2" height="2"/><rect x="1077" y="538" width="2" height="2"/><rect x="1079" y="545" width="2" height="2"/><rect x="1082" y="535" width="2" height="2"/><rect x="1087" y="543" width="2" height="2"/><rect x="1093" y="519" width="2" height="2"/><rect x="1124" y="550" width="2" height="2"/><rect x="1153" y="548" width="2" height="2"/><rect x="1161" y="540" width="2" height="2"/><rect x="1040" y="572" width="2" height="2"/><rect x="1043" y="520" width="2" height="2"/><rect x="1045" y="516" width="2" height="2"/><rect x="1048" y="469" width="2" height="2"/><rect x="1051" y="463" width="2" height="2"/><rect x="1053" y="479" width="2" height="2"/><rect x="1056" y="513" width="2" height="2"/><rect x="1059" y="538" width="2" height="2"/><rect x="1064" y="505" width="2" height="2"/><rect x="1066" y="506" width="2" height="2"/><rect x="1069" y="479" width="2" height="2"/><rect x="1074" y="488" width="2" height="2"/><rect x="1077" y="532" width="2" height="2"/><rect x="1079" y="543" width="2" height="2"/><rect x="1082" y="535" width="2" height="2"/><rect x="1087" y="543" width="2" height="2"/><rect x="1090" y="555" width="2" height="2"/><rect x="1093" y="519" width="2" height="2"/><rect x="1096" y="558" width="2" height="2"/><rect x="1101" y="574" width="2" height="2"/><rect x="1107" y="558" width="2" height="2"/><rect x="1111" y="556" width="2" height="2"/><rect x="1108" y="580" width="2" height="2"/><rect x="1114" y="587" width="2" height="2"/><rect x="1116" y="582" width="2" height="2"/><rect x="1119" y="584" width="2" height="2"/><rect x="1122" y="574" width="2" height="2"/><rect x="1124" y="550" width="2" height="2"/><rect x="1135" y="582" width="2" height="2"/><rect x="1137" y="582" width="2" height="2"/><rect x="1150" y="574" width="2" height="2"/><rect x="1155" y="566" width="2" height="2"/><rect x="1104" y="593" width="2" height="2"/><rect x="1142" y="619" width="2" height="2"/><rect x="1145" y="619" width="2" height="2"/><rect x="1161" y="539" width="2" height="2"/><rect x="1171" y="556" width="2" height="2"/><rect x="1169" y="563" width="2" height="2"/><rect x="1166" y="566" width="2" height="2"/><rect x="1163" y="579" width="2" height="2"/><rect x="1178" y="571" width="2" height="2"/><rect x="1183" y="582" width="2" height="2"/><rect x="1186" y="571" width="2" height="2"/><rect x="1190" y="571" width="2" height="2"/><rect x="1195" y="575" width="2" height="2"/><rect x="1198" y="577" width="2" height="2"/><rect x="1201" y="569" width="2" height="2"/><rect x="1205" y="569" width="2" height="2"/><rect x="1207" y="569" width="2" height="2"/><rect x="1212" y="565" width="2" height="2"/><rect x="1216" y="564" width="2" height="2"/><rect x="1220" y="569" width="2" height="2"/><rect x="1222" y="569" width="2" height="2"/><rect x="1225" y="569" width="2" height="2"/><rect x="1229" y="571" width="2" height="2"/><rect x="1232" y="575" width="2" height="2"/><rect x="1234" y="575" width="2" height="2"/><rect x="1238" y="576" width="2" height="2"/><rect x="1241" y="579" width="2" height="2"/><rect x="1246" y="571" width="2" height="2"/><rect x="1248" y="566" width="2" height="2"/><rect x="1250" y="563" width="2" height="2"/><rect x="1252" y="569" width="2" height="2"/><rect x="1255" y="566" width="2" height="2"/><rect x="1258" y="574" width="2" height="2"/><rect x="1262" y="571" width="2" height="2"/><rect x="1264" y="571" width="2" height="2"/><rect x="1266" y="574" width="2" height="2"/><rect x="1269" y="574" width="2" height="2"/><rect x="1275" y="566" width="2" height="2"/><rect x="1277" y="566" width="2" height="2"/><rect x="1281" y="565" width="2" height="2"/><rect x="1285" y="561" width="2" height="2"/><rect x="1287" y="563" width="2" height="2"/><rect x="1291" y="563" width="2" height="2"/><rect x="1295" y="566" width="2" height="2"/><rect x="1298" y="566" width="2" height="2"/><rect x="1300" y="566" width="2" height="2"/><rect x="1306" y="566" width="2" height="2"/><rect x="1308" y="564" width="2" height="2"/><rect x="1311" y="564" width="2" height="2"/><rect x="1313" y="564" width="2" height="2"/><rect x="1317" y="563" width="2" height="2"/><rect x="1319" y="563" width="2" height="2"/><rect x="1321" y="563" width="2" height="2"/><rect x="1324" y="563" width="2" height="2"/><rect x="1326" y="563" width="2" height="2"/><rect x="1328" y="563" width="2" height="2"/><rect x="1330" y="563" width="2" height="2"/><rect x="1333" y="563" width="2" height="2"/><rect x="1335" y="563" width="2" height="2"/><rect x="1337" y="563" width="2" height="2"/><rect x="1339" y="563" width="2" height="2"/><rect x="1342" y="563" width="2" height="2"/><rect x="1344" y="563" width="2" height="2"/><rect x="1346" y="563" width="2" height="2"/><rect x="1351" y="565" width="2" height="2"/><rect x="1354" y="567" width="2" height="2"/><rect x="1356" y="569" width="2" height="2"/><rect x="1359" y="569" width="2" height="2"/><rect x="1361" y="569" width="2" height="2"/><rect x="1363" y="569" width="2" height="2"/><rect x="1365" y="569" width="2" height="2"/><rect x="1369" y="569" width="2" height="2"/><rect x="1371" y="566" width="2" height="2"/><rect x="1373" y="571" width="2" height="2"/><rect x="1376" y="571" width="2" height="2"/><rect x="1379" y="571" width="2" height="2"/><rect x="1381" y="563" width="2" height="2"/><rect x="1384" y="563" width="2" height="2"/><rect x="1386" y="563" width="2" height="2"/><rect x="1389" y="563" width="2" height="2"/><rect x="1391" y="563" width="2" height="2"/><rect x="1395" y="566" width="2" height="2"/><rect x="1397" y="565" width="2" height="2"/><rect x="1400" y="564" width="2" height="2"/><rect x="1403" y="565" width="2" height="2"/><rect x="1406" y="566" width="2" height="2"/><rect x="1408" y="566" width="2" height="2"/><rect x="1411" y="566" width="2" height="2"/><rect x="1414" y="567" width="2" height="2"/><rect x="1416" y="566" width="2" height="2"/><rect x="1420" y="567" width="2" height="2"/><rect x="1422" y="566" width="2" height="2"/><rect x="1424" y="569" width="2" height="2"/><rect x="1426" y="570" width="2" height="2"/><rect x="1429" y="569" width="2" height="2"/><rect x="1432" y="566" width="2" height="2"/><rect x="1434" y="566" width="2" height="2"/><rect x="1436" y="566" width="2" height="2"/><rect x="1439" y="566" width="2" height="2"/><rect x="1441" y="566" width="2" height="2"/><rect x="1443" y="566" width="2" height="2"/></g>
<polyline points="188.0,298.8 200.0,298.5 201.0,297.8 203.0,298.6 216.0,298.6 217.0,297.8 219.0,298.6 250.0,298.8 256.0,299.5 260.0,298.8 280.0,298.8 284.0,299.5 290.0,298.6 296.0,299.5 312.0,299.5 316.0,298.8 346.0,298.6 362.0,298.4 375.0,297.6 400.0,296.8 419.0,295.5 450.0,294.5 468.0,294.0 470.0,293.0 500.0,290.0 537.0,287.0 575.0,285.5 577.0,284.5 612.0,283.0 650.0,280.5 687.0,279.5 690.0,279.0 750.0,279.2 753.0,278.6 776.0,278.8 780.0,280.0 800.0,280.3 825.0,279.3 900.0,279.3 925.0,280.0 975.0,282.0 1005.0,283.0 1030.0,283.0 1050.0,282.0 1075.0,280.8 1100.0,279.2 1127.0,277.4 1160.0,271.8 1186.0,268.0 1217.0,265.0 1247.0,260.0 1280.0,257.0 1303.0,256.0 1326.0,253.7 1330.0,252.0 1360.0,251.4 1366.0,250.0 1382.0,250.8 1393.0,250.0 1432.0,250.0 1445.0,247.6" fill="none" stroke="#00AA00" stroke-width="2" shape-rendering="crispEdges" stroke-linejoin="round"/>
<polyline points="188.0,258.2 197.0,258.2 201.0,251.0 212.0,251.0 214.0,243.8 220.0,243.8 223.0,236.5 256.0,236.5 259.0,243.8 304.0,243.8 306.0,236.5 335.0,236.5 338.0,229.2 359.0,229.2 361.0,222.0 363.0,222.0 365.5,229.2 370.0,222.0 382.0,222.0 386.0,214.8 456.0,214.8 458.0,207.5 519.0,207.5 521.0,200.2 540.0,200.2 542.0,193.0 558.0,193.0 562.0,185.8 574.0,185.8 576.0,178.5 579.0,178.5 582.0,185.8 585.0,178.5 621.0,178.5 624.0,185.8 629.0,185.8 632.0,193.0 645.0,193.0 647.0,200.2 650.0,200.2 652.0,207.5 655.0,207.5 658.0,214.8 666.0,214.8 668.0,222.0 671.0,222.0 674.0,229.2 677.0,229.2 679.0,236.5 682.0,236.5 684.0,229.2 686.0,236.5 692.0,236.5 695.0,243.8 700.0,243.8 703.0,251.0 705.0,258.2 713.0,258.2 716.0,265.5 721.0,265.5 724.0,272.8 731.0,272.8 734.0,280.0 737.0,280.0 739.0,272.8 741.0,280.0 747.0,280.0 747.3,279.7 752.0,293.9 754.9,287.3 758.6,286.9 763.4,308.1 766.2,309.0 767.7,319.4 770.9,330.8 773.8,317.5 775.7,323.2 781.3,323.6 784.2,338.4 786.1,325.1 790.8,331.2 792.7,331.7 793.0,330.0 794.0,360.0 797.0,361.0 800.0,367.0 803.0,360.0 814.0,360.0 815.0,382.0 818.0,375.0 821.0,389.0 823.0,374.0 828.0,373.6 837.0,395.6 840.0,395.0 844.0,383.0 847.0,395.0 850.0,383.0 852.0,395.0 855.0,396.0 857.0,410.0 860.0,410.0 866.0,425.0 868.0,411.0 871.0,432.0 874.0,431.6 878.0,411.0 883.0,423.0 886.0,425.0 889.0,447.0 894.0,433.0 897.0,442.0 899.6,454.0 902.4,425.0 905.6,425.0 908.0,442.0 912.0,461.0 915.0,455.0 918.0,462.0 923.0,476.0 926.0,477.0 931.0,497.0 935.0,477.0 939.0,477.0 942.0,504.0 946.0,497.0 949.0,491.0 952.0,500.0 954.0,499.0 957.0,511.0 960.0,498.0 963.0,485.0 965.0,488.0 968.0,470.0 970.0,497.0 972.4,477.0 975.0,498.0 978.0,504.0 981.0,511.0 984.0,498.0 987.0,497.0 989.0,478.0 991.0,490.0 997.0,478.0 1000.0,491.0 1003.0,498.0 1007.0,491.0 1010.0,498.0 1015.0,505.0 1019.0,477.0 1026.0,497.0 1030.0,490.0 1034.0,483.0 1037.0,482.0 1039.0,469.0 1041.0,469.0 1044.0,475.6 1052.0,475.6 1057.0,462.0 1060.0,461.0 1062.0,467.6 1074.0,467.6 1077.0,441.0 1079.0,447.0 1082.0,440.0 1089.0,439.6 1091.0,425.6 1094.0,425.0 1096.0,432.0 1100.0,426.0 1105.0,424.5 1107.5,418.0 1112.5,417.5 1117.5,405.0 1120.0,409.5 1125.0,409.5 1128.8,403.8 1136.2,403.0 1137.0,396.0 1139.0,388.8 1144.0,381.5 1149.0,381.5 1151.5,374.2 1157.0,374.2 1160.0,367.0 1163.0,367.0 1166.6,352.5 1170.0,359.8 1175.6,359.8 1181.0,345.2 1186.0,345.2 1188.5,338.0 1207.0,338.0 1209.5,330.8 1219.6,330.8 1223.0,323.5 1225.5,323.5 1228.7,316.2 1235.4,316.2 1238.8,309.0 1270.4,309.0 1272.7,301.8 1279.5,301.8 1282.8,309.0 1301.0,309.0 1305.0,301.8 1308.8,309.0 1313.3,301.8 1322.3,301.8 1325.3,294.5 1330.0,294.5 1332.5,280.0 1347.0,280.0 1350.6,265.5 1356.0,265.5 1364.0,280.0 1368.6,265.5 1372.0,272.8 1380.0,272.8 1382.0,280.0 1388.5,280.0 1391.0,272.8 1443.0,272.8 1445.0,265.5" fill="none" stroke="#0000FF" stroke-width="2" shape-rendering="crispEdges" stroke-linejoin="round"/>
<polyline points="188.5,348.8 196.0,350.0 201.6,350.6 204.1,353.8 209.1,353.8 213.5,356.9 234.1,356.9 236.6,354.4 246.0,354.4 251.0,351.9 254.8,353.1 256.0,353.8 260.4,353.1 263.5,351.9 272.2,351.9 274.1,350.4 289.8,350.4 291.0,351.9 306.0,351.9 307.9,353.8 317.2,353.8 318.5,355.0 324.8,355.0 326.0,356.5 331.0,356.9 335.4,358.1 338.5,359.4 340.0,360.5 347.5,360.8 350.0,363.0 365.0,363.2 372.5,365.5 385.0,367.5 400.0,369.5 405.0,368.0 436.2,368.0 440.0,370.0 487.5,370.0 500.0,371.2 510.0,376.2 517.5,379.5 525.0,380.5 530.0,383.0 540.0,384.5 547.5,386.2 555.0,389.5 562.5,390.0 566.2,391.8 598.8,391.8 602.5,390.0 607.5,389.5 620.0,385.0 627.5,383.2 632.5,380.5 640.0,379.5 650.0,374.5 660.0,370.5 675.0,365.0 682.5,363.0 690.0,359.5 702.5,352.5 715.0,346.2 725.0,342.5 735.0,339.5 745.0,335.0 747.3,335.5 750.1,329.8 753.9,332.3 757.7,327.0 760.5,328.9 764.3,328.5 768.1,322.3 775.7,312.8 779.4,310.4 786.1,310.0 794.6,301.5 798.4,300.9 800.2,302.4 805.0,293.0 807.8,289.6 810.6,300.5 813.1,303.0 816.3,299.6 819.2,299.2 822.9,296.2 825.8,296.7 835.2,296.4 840.0,299.0 844.7,294.5 847.5,293.9 850.4,288.8 855.1,288.8 857.0,280.7 859.8,279.3 863.0,275.0 861.2,276.2 867.5,276.2 872.5,282.5 876.2,282.5 880.0,275.0 886.2,280.0 898.8,280.0 906.2,271.2 910.0,271.2 912.5,273.8 916.2,272.0 925.0,275.8 928.8,275.0 936.2,267.0 945.0,267.0 947.5,269.5 952.5,267.5 960.0,269.5 965.0,270.0 972.5,262.0 976.2,262.0 983.8,267.5 988.8,265.0 995.0,268.0 1002.5,270.0 1011.2,266.2 1017.5,265.5 1025.0,269.5 1045.0,271.2 1052.5,275.5 1055.0,271.2 1060.0,271.2 1063.8,274.2 1068.8,271.2 1076.2,277.0 1082.5,279.5 1095.0,280.0 1100.0,283.7 1104.5,285.3 1109.0,289.8 1115.8,292.8 1127.1,293.7 1136.1,298.8 1144.0,305.6 1148.5,306.3 1154.2,309.5 1157.6,310.1 1164.3,318.5 1170.0,319.2 1179.0,325.9 1187.6,333.8 1197.1,333.4 1206.1,334.3 1212.9,338.8 1217.4,339.9 1228.7,347.4 1233.2,347.4 1235.4,350.8 1241.1,351.4 1245.6,353.7 1250.1,351.9 1253.5,353.7 1261.4,354.2 1267.0,357.1 1272.7,358.2 1277.2,360.5 1296.4,360.9 1303.2,365.4 1309.9,366.6 1319.0,371.8 1325.7,373.3 1332.5,382.4 1342.7,384.0 1350.6,391.4 1355.1,391.4 1359.6,386.9 1363.0,386.2 1368.6,392.1 1374.3,388.0 1376.5,388.7 1381.0,386.2 1386.7,386.2 1392.3,391.4 1398.0,391.4 1402.5,390.3 1411.5,390.3 1416.0,392.1 1429.6,392.5 1434.1,391.9 1440.9,391.9 1445.4,395.9" fill="none" stroke="#FF0000" stroke-width="2" shape-rendering="crispEdges" stroke-linejoin="round"/>
<g shape-rendering="crispEdges">
<rect x="189" y="47" width="1258" height="2" fill="#808080"/>
<rect x="187" y="48" width="2" height="582" fill="#808080"/>
<rect x="1445" y="48" width="1" height="581" fill="#808080"/>
<rect x="1447" y="48" width="2" height="581" fill="#808080"/>
<rect x="40" y="48" width="1" height="581" fill="#808080"/>
<rect x="36" y="48" width="8" height="1" fill="#808080"/>
<rect x="36" y="120" width="4" height="1" fill="#808080"/>
<rect x="36" y="193" width="4" height="1" fill="#808080"/>
<rect x="36" y="266" width="4" height="1" fill="#808080"/>
<rect x="36" y="338" width="4" height="1" fill="#808080"/>
<rect x="36" y="410" width="4" height="1" fill="#808080"/>
<rect x="36" y="483" width="4" height="1" fill="#808080"/>
<rect x="36" y="556" width="4" height="1" fill="#808080"/>
<rect x="36" y="628" width="8" height="1" fill="#808080"/>
<rect x="77" y="48" width="1" height="581" fill="#808080"/>
<rect x="73" y="48" width="8" height="1" fill="#808080"/>
<rect x="73" y="120" width="4" height="1" fill="#808080"/>
<rect x="73" y="193" width="4" height="1" fill="#808080"/>
<rect x="73" y="266" width="4" height="1" fill="#808080"/>
<rect x="73" y="338" width="4" height="1" fill="#808080"/>
<rect x="73" y="410" width="4" height="1" fill="#808080"/>
<rect x="73" y="483" width="4" height="1" fill="#808080"/>
<rect x="73" y="556" width="4" height="1" fill="#808080"/>
<rect x="73" y="628" width="8" height="1" fill="#808080"/>
<rect x="114" y="48" width="1" height="581" fill="#808080"/>
<rect x="110" y="48" width="8" height="1" fill="#808080"/>
<rect x="110" y="96" width="4" height="1" fill="#808080"/>
<rect x="110" y="145" width="4" height="1" fill="#808080"/>
<rect x="110" y="193" width="4" height="1" fill="#808080"/>
<rect x="110" y="241" width="4" height="1" fill="#808080"/>
<rect x="110" y="290" width="4" height="1" fill="#808080"/>
<rect x="110" y="338" width="4" height="1" fill="#808080"/>
<rect x="110" y="386" width="4" height="1" fill="#808080"/>
<rect x="110" y="435" width="4" height="1" fill="#808080"/>
<rect x="110" y="483" width="4" height="1" fill="#808080"/>
<rect x="110" y="531" width="4" height="1" fill="#808080"/>
<rect x="110" y="580" width="4" height="1" fill="#808080"/>
<rect x="110" y="628" width="8" height="1" fill="#808080"/>
<rect x="151" y="48" width="1" height="581" fill="#808080"/>
<rect x="147" y="48" width="8" height="1" fill="#808080"/>
<rect x="147" y="145" width="4" height="1" fill="#808080"/>
<rect x="147" y="241" width="4" height="1" fill="#808080"/>
<rect x="147" y="338" width="4" height="1" fill="#808080"/>
<rect x="147" y="435" width="4" height="1" fill="#808080"/>
<rect x="147" y="531" width="4" height="1" fill="#808080"/>
<rect x="147" y="628" width="8" height="1" fill="#808080"/>
<rect x="184" y="48" width="3" height="1" fill="#808080"/>
<rect x="184" y="120" width="3" height="1" fill="#808080"/>
<rect x="184" y="193" width="3" height="1" fill="#808080"/>
<rect x="184" y="266" width="3" height="1" fill="#808080"/>
<rect x="184" y="338" width="3" height="1" fill="#808080"/>
<rect x="184" y="410" width="3" height="1" fill="#808080"/>
<rect x="184" y="483" width="3" height="1" fill="#808080"/>
<rect x="184" y="556" width="3" height="1" fill="#808080"/>
<rect x="184" y="628" width="3" height="1" fill="#808080"/>
<rect x="1449" y="48" width="4" height="1" fill="#808080"/>
<rect x="1449" y="120" width="4" height="1" fill="#808080"/>
<rect x="1449" y="193" width="4" height="1" fill="#808080"/>
<rect x="1449" y="266" width="4" height="1" fill="#808080"/>
<rect x="1449" y="338" width="4" height="1" fill="#808080"/>
<rect x="1449" y="410" width="4" height="1" fill="#808080"/>
<rect x="1449" y="483" width="4" height="1" fill="#808080"/>
<rect x="1449" y="556" width="4" height="1" fill="#808080"/>
<rect x="1449" y="628" width="4" height="1" fill="#808080"/>
<rect x="1485" y="48" width="1" height="581" fill="#808080"/>
<rect x="1481" y="48" width="9" height="1" fill="#808080"/>
<rect x="1485" y="120" width="5" height="1" fill="#808080"/>
<rect x="1485" y="193" width="5" height="1" fill="#808080"/>
<rect x="1485" y="266" width="5" height="1" fill="#808080"/>
<rect x="1485" y="338" width="5" height="1" fill="#808080"/>
<rect x="1485" y="410" width="5" height="1" fill="#808080"/>
<rect x="1485" y="483" width="5" height="1" fill="#808080"/>
<rect x="1485" y="556" width="5" height="1" fill="#808080"/>
<rect x="1481" y="628" width="7" height="1" fill="#808080"/>
<rect x="1522" y="48" width="1" height="581" fill="#808080"/>
<rect x="1518" y="48" width="9" height="1" fill="#808080"/>
<rect x="1522" y="120" width="5" height="1" fill="#808080"/>
<rect x="1522" y="193" width="5" height="1" fill="#808080"/>
<rect x="1522" y="266" width="5" height="1" fill="#808080"/>
<rect x="1522" y="338" width="5" height="1" fill="#808080"/>
<rect x="1522" y="410" width="5" height="1" fill="#808080"/>
<rect x="1522" y="483" width="5" height="1" fill="#808080"/>
<rect x="1522" y="556" width="5" height="1" fill="#808080"/>
<rect x="1518" y="628" width="7" height="1" fill="#808080"/>
<rect x="1559" y="48" width="1" height="581" fill="#808080"/>
<rect x="1555" y="48" width="9" height="1" fill="#808080"/>
<rect x="1559" y="120" width="5" height="1" fill="#808080"/>
<rect x="1559" y="193" width="5" height="1" fill="#808080"/>
<rect x="1559" y="266" width="5" height="1" fill="#808080"/>
<rect x="1559" y="338" width="5" height="1" fill="#808080"/>
<rect x="1559" y="410" width="5" height="1" fill="#808080"/>
<rect x="1559" y="483" width="5" height="1" fill="#808080"/>
<rect x="1559" y="556" width="5" height="1" fill="#808080"/>
<rect x="1555" y="628" width="7" height="1" fill="#808080"/>
<rect x="188" y="629" width="1" height="4" fill="#808080"/>
<rect x="240" y="629" width="1" height="4" fill="#808080"/>
<rect x="293" y="629" width="1" height="4" fill="#808080"/>
<rect x="346" y="629" width="1" height="4" fill="#808080"/>
<rect x="398" y="629" width="1" height="4" fill="#808080"/>
<rect x="450" y="629" width="1" height="4" fill="#808080"/>
<rect x="503" y="629" width="1" height="4" fill="#808080"/>
<rect x="556" y="629" width="1" height="4" fill="#808080"/>
<rect x="608" y="629" width="1" height="4" fill="#808080"/>
<rect x="660" y="629" width="1" height="4" fill="#808080"/>
<rect x="713" y="629" width="1" height="4" fill="#808080"/>
<rect x="766" y="629" width="1" height="4" fill="#808080"/>
<rect x="818" y="629" width="1" height="4" fill="#808080"/>
<rect x="870" y="629" width="1" height="4" fill="#808080"/>
<rect x="923" y="629" width="1" height="4" fill="#808080"/>
<rect x="976" y="629" width="1" height="4" fill="#808080"/>
<rect x="1028" y="629" width="1" height="4" fill="#808080"/>
<rect x="1080" y="629" width="1" height="4" fill="#808080"/>
<rect x="1133" y="629" width="1" height="4" fill="#808080"/>
<rect x="1186" y="629" width="1" height="4" fill="#808080"/>
<rect x="1238" y="629" width="1" height="4" fill="#808080"/>
<rect x="1290" y="629" width="1" height="4" fill="#808080"/>
<rect x="1343" y="629" width="1" height="4" fill="#808080"/>
<rect x="1396" y="629" width="1" height="4" fill="#808080"/>
<rect x="1448" y="629" width="1" height="4" fill="#808080"/>
<rect x="542" y="624" width="2" height="13" fill="#FFFF00"/>
<rect x="1168" y="624" width="2" height="13" fill="#FFFF00"/>
</g>
<text x="34.3" y="52.5" fill="#FF0000" text-anchor="end" class="t">25.0</text>
<text x="34.3" y="124.5" fill="#FF0000" text-anchor="end" class="t">20.0</text>
<text x="34.3" y="197.5" fill="#FF0000" text-anchor="end" class="t">15.0</text>
<text x="34.3" y="270.5" fill="#FF0000" text-anchor="end" class="t">10.0</text>
<text x="34.3" y="342.5" fill="#FF0000" text-anchor="end" class="t">5.0</text>
<text x="34.3" y="414.5" fill="#FF0000" text-anchor="end" class="t">0.0</text>
<text x="34.3" y="487.5" fill="#FF0000" text-anchor="end" class="t">-5.0</text>
<text x="34.3" y="560.5" fill="#FF0000" text-anchor="end" class="t">-10.0</text>
<text x="34.3" y="632.5" fill="#FF0000" text-anchor="end" class="t">-15.0</text>
<text x="71.3" y="52.5" fill="#00AA00" text-anchor="end" class="t">1050</text>
<text x="71.3" y="124.5" fill="#00AA00" text-anchor="end" class="t">1040</text>
<text x="71.3" y="197.5" fill="#00AA00" text-anchor="end" class="t">1030</text>
<text x="71.3" y="270.5" fill="#00AA00" text-anchor="end" class="t">1020</text>
<text x="71.3" y="342.5" fill="#00AA00" text-anchor="end" class="t">1010</text>
<text x="71.3" y="414.5" fill="#00AA00" text-anchor="end" class="t">1000</text>
<text x="71.3" y="487.5" fill="#00AA00" text-anchor="end" class="t">990</text>
<text x="71.3" y="560.5" fill="#00AA00" text-anchor="end" class="t">980</text>
<text x="71.3" y="632.5" fill="#00AA00" text-anchor="end" class="t">970</text>
<text x="108.3" y="52.5" fill="#000" text-anchor="end" class="t">120.0</text>
<text x="108.3" y="100.5" fill="#000" text-anchor="end" class="t">110.0</text>
<text x="108.3" y="149.5" fill="#000" text-anchor="end" class="t">100.0</text>
<text x="108.3" y="197.5" fill="#000" text-anchor="end" class="t">90.0</text>
<text x="108.3" y="245.5" fill="#000" text-anchor="end" class="t">80.0</text>
<text x="108.3" y="294.5" fill="#000" text-anchor="end" class="t">70.0</text>
<text x="108.3" y="342.5" fill="#000" text-anchor="end" class="t">60.0</text>
<text x="108.3" y="390.5" fill="#000" text-anchor="end" class="t">50.0</text>
<text x="108.3" y="439.5" fill="#000" text-anchor="end" class="t">40.0</text>
<text x="108.3" y="487.5" fill="#000" text-anchor="end" class="t">30.0</text>
<text x="108.3" y="535.5" fill="#000" text-anchor="end" class="t">20.0</text>
<text x="108.3" y="584.5" fill="#000" text-anchor="end" class="t">10.0</text>
<text x="108.3" y="632.5" fill="#000" text-anchor="end" class="t">0.0</text>
<text x="145.3" y="52.5" fill="#FFC000" text-anchor="end" class="t">30</text>
<text x="145.3" y="149.5" fill="#FFC000" text-anchor="end" class="t">25</text>
<text x="145.3" y="245.5" fill="#FFC000" text-anchor="end" class="t">20</text>
<text x="145.3" y="342.5" fill="#FFC000" text-anchor="end" class="t">15</text>
<text x="145.3" y="439.5" fill="#FFC000" text-anchor="end" class="t">10</text>
<text x="145.3" y="535.5" fill="#FFC000" text-anchor="end" class="t">5</text>
<text x="145.3" y="632.5" fill="#FFC000" text-anchor="end" class="t">0</text>
<text x="182.3" y="52.5" fill="#FF8000" text-anchor="end" class="t">1200</text>
<text x="182.3" y="124.5" fill="#FF8000" text-anchor="end" class="t">1050</text>
<text x="182.3" y="197.5" fill="#FF8000" text-anchor="end" class="t">900</text>
<text x="182.3" y="270.5" fill="#FF8000" text-anchor="end" class="t">750</text>
<text x="182.3" y="342.5" fill="#FF8000" text-anchor="end" class="t">600</text>
<text x="182.3" y="414.5" fill="#FF8000" text-anchor="end" class="t">450</text>
<text x="182.3" y="487.5" fill="#FF8000" text-anchor="end" class="t">300</text>
<text x="182.3" y="560.5" fill="#FF8000" text-anchor="end" class="t">150</text>
<text x="182.3" y="632.5" fill="#FF8000" text-anchor="end" class="t">0</text>
<text x="1454" y="52.5" fill="#0000FF" class="t">100</text>
<text x="1491" y="52.5" fill="#0099FF" class="t">16.0</text>
<text x="1528" y="52.5" fill="#000" class="t">360 N</text>
<text x="1565" y="52.5" fill="#FF0080" class="t">16.0</text>
<text x="1454" y="124.5" fill="#0000FF" class="t">90</text>
<text x="1491" y="124.5" fill="#0099FF" class="t">14.0</text>
<text x="1528" y="124.5" fill="#000" class="t">315</text>
<text x="1565" y="124.5" fill="#FF0080" class="t">14.0</text>
<text x="1454" y="197.5" fill="#0000FF" class="t">80</text>
<text x="1491" y="197.5" fill="#0099FF" class="t">12.0</text>
<text x="1528" y="197.5" fill="#000" class="t">270 W</text>
<text x="1565" y="197.5" fill="#FF0080" class="t">12.0</text>
<text x="1454" y="270.5" fill="#0000FF" class="t">70</text>
<text x="1491" y="270.5" fill="#0099FF" class="t">10.0</text>
<text x="1528" y="270.5" fill="#000" class="t">225</text>
<text x="1565" y="270.5" fill="#FF0080" class="t">10.0</text>
<text x="1454" y="342.5" fill="#0000FF" class="t">60</text>
<text x="1491" y="342.5" fill="#0099FF" class="t">8.0</text>
<text x="1528" y="342.5" fill="#000" class="t">180 S</text>
<text x="1565" y="342.5" fill="#FF0080" class="t">8.0</text>
<text x="1454" y="414.5" fill="#0000FF" class="t">50</text>
<text x="1491" y="414.5" fill="#0099FF" class="t">6.0</text>
<text x="1528" y="414.5" fill="#000" class="t">135</text>
<text x="1565" y="414.5" fill="#FF0080" class="t">6.0</text>
<text x="1454" y="487.5" fill="#0000FF" class="t">40</text>
<text x="1491" y="487.5" fill="#0099FF" class="t">4.0</text>
<text x="1528" y="487.5" fill="#000" class="t">90 O</text>
<text x="1565" y="487.5" fill="#FF0080" class="t">4.0</text>
<text x="1454" y="560.5" fill="#0000FF" class="t">30</text>
<text x="1491" y="560.5" fill="#0099FF" class="t">2.0</text>
<text x="1528" y="560.5" fill="#000" class="t">45</text>
<text x="1565" y="560.5" fill="#FF0080" class="t">2.0</text>
<text x="1454" y="632.5" fill="#0000FF" class="t">20</text>
<text x="1491" y="632.5" fill="#0099FF" class="t">0.0</text>
<text x="1528" y="632.5" fill="#000" class="t">0</text>
<text x="1565" y="632.5" fill="#FF0080" class="t">0.0</text>
<text x="1547" y="632.5" fill="#000" class="t">N</text>
<text x="20" y="37" fill="#FF0000" class="t">°C</text>
<text x="48" y="37" fill="#00AA00" class="t">hPa</text>
<text x="79" y="37" fill="#000" class="t">km/h</text>
<text x="125" y="37" fill="#FFC000" class="t">min</text>
<text x="151" y="37" fill="#FF8000" class="t">W/m²</text>
<text x="1448" y="37" fill="#0000FF" class="t">%</text>
<text x="1485" y="37" fill="#0099FF" class="t">l/m²</text>
<text x="1522" y="36.5" fill="#000" class="t">°</text>
<text x="1559" y="37" fill="#FF0080" class="t">UV-I</text>
<text x="189.2" y="646.5" fill="#000" text-anchor="middle" class="t">00:00</text>
<text x="241.7" y="646.5" fill="#000" text-anchor="middle" class="t">01:00</text>
<text x="294.2" y="646.5" fill="#000" text-anchor="middle" class="t">02:00</text>
<text x="346.7" y="646.5" fill="#000" text-anchor="middle" class="t">03:00</text>
<text x="399.2" y="646.5" fill="#000" text-anchor="middle" class="t">04:00</text>
<text x="451.7" y="646.5" fill="#000" text-anchor="middle" class="t">05:00</text>
<text x="504.2" y="646.5" fill="#000" text-anchor="middle" class="t">06:00</text>
<text x="556.7" y="646.5" fill="#000" text-anchor="middle" class="t">07:00</text>
<text x="609.2" y="646.5" fill="#000" text-anchor="middle" class="t">08:00</text>
<text x="661.7" y="646.5" fill="#000" text-anchor="middle" class="t">09:00</text>
<text x="714.2" y="646.5" fill="#000" text-anchor="middle" class="t">10:00</text>
<text x="766.7" y="646.5" fill="#000" text-anchor="middle" class="t">11:00</text>
<text x="819.2" y="646.5" fill="#000" text-anchor="middle" class="t">12:00</text>
<text x="871.7" y="646.5" fill="#000" text-anchor="middle" class="t">13:00</text>
<text x="924.2" y="646.5" fill="#000" text-anchor="middle" class="t">14:00</text>
<text x="976.7" y="646.5" fill="#000" text-anchor="middle" class="t">15:00</text>
<text x="1029.2" y="646.5" fill="#000" text-anchor="middle" class="t">16:00</text>
<text x="1081.7" y="646.5" fill="#000" text-anchor="middle" class="t">17:00</text>
<text x="1134.2" y="646.5" fill="#000" text-anchor="middle" class="t">18:00</text>
<text x="1186.7" y="646.5" fill="#000" text-anchor="middle" class="t">19:00</text>
<text x="1239.2" y="646.5" fill="#000" text-anchor="middle" class="t">20:00</text>
<text x="1291.7" y="646.5" fill="#000" text-anchor="middle" class="t">21:00</text>
<text x="1344.2" y="646.5" fill="#000" text-anchor="middle" class="t">22:00</text>
<text x="1396.7" y="646.5" fill="#000" text-anchor="middle" class="t">23:00</text>
<text x="1449.2" y="646.5" fill="#000" text-anchor="middle" class="t">24:00</text>
<text x="802.5" y="21" fill="#000" text-anchor="middle" class="h">Sonntag, 16.03.2025</text>
<rect x="198.5" y="33.5" width="9" height="9" fill="#FF0000" stroke="#000" stroke-width="1" shape-rendering="crispEdges"/>
<text x="212" y="42" fill="#FF0000" class="t">Temp. A.</text>
<rect x="293.5" y="33.5" width="9" height="9" fill="#0000FF" stroke="#000" stroke-width="1" shape-rendering="crispEdges"/>
<text x="307" y="42" fill="#0000FF" class="t">Feuchte A.</text>
<rect x="388.5" y="33.5" width="9" height="9" fill="#00AA00" stroke="#000" stroke-width="1" shape-rendering="crispEdges"/>
<text x="402" y="42" fill="#00AA00" class="t">Luftdruck</text>
<rect x="483.5" y="33.5" width="9" height="9" fill="#0099FF" stroke="#000" stroke-width="1" shape-rendering="crispEdges"/>
<text x="497" y="42" fill="#0099FF" class="t">Regen</text>
<rect x="578.5" y="33.5" width="9" height="9" fill="#000" stroke="#000" stroke-width="1" shape-rendering="crispEdges"/>
<text x="592" y="42" fill="#000" class="t">Wind</text>
<rect x="673.5" y="33.5" width="9" height="9" fill="#000" stroke="#000" stroke-width="1" shape-rendering="crispEdges"/>
<text x="687" y="42" fill="#000" class="t">Richtung</text>
<rect x="768.5" y="33.5" width="9" height="9" fill="#FFC000" stroke="#000" stroke-width="1" shape-rendering="crispEdges"/>
<text x="782" y="42" fill="#FFC000" class="t">Sonnenschein</text>
<rect x="863.5" y="33.5" width="9" height="9" fill="#800080" stroke="#000" stroke-width="1" shape-rendering="crispEdges"/>
<text x="877" y="42" fill="#0099FF" class="t">ET</text>
<rect x="958.5" y="33.5" width="9" height="9" fill="#FF0080" stroke="#000" stroke-width="1" shape-rendering="crispEdges"/>
<text x="972" y="42" fill="#FF0080" class="t">UV</text>
<rect x="1053.5" y="33.5" width="9" height="9" fill="#FF8000" stroke="#000" stroke-width="1" shape-rendering="crispEdges"/>
<text x="1067" y="42" fill="#FF8000" class="t">Solar</text>
<rect x="1148.5" y="33.5" width="9" height="9" fill="#FF0080" stroke="#000" stroke-width="1" shape-rendering="crispEdges"/>
<text x="1162" y="42" fill="#FF0000" class="t">Taupunkt</text>
<rect x="1243.5" y="33.5" width="9" height="9" fill="#804000" stroke="#000" stroke-width="1" shape-rendering="crispEdges"/>
<text x="1257" y="42" fill="#000" class="t">Windböen</text>
<polyline points="1338.5,42 1338.5,33.5 1347.5,33.5 1347.5,42.5 1344,42.5" fill="none" stroke="#FF0000" stroke-width="1" shape-rendering="crispEdges"/>
<text x="1352" y="42" fill="#FF0000" class="t">4.5 Monat-Ø</text>
<text x="10" y="658" fill="#000" class="t">11:55</text>
<g fill="#FFFF00" shape-rendering="crispEdges"><rect x="43" y="651" width="3" height="1"/><rect x="41" y="652" width="7" height="2"/><rect x="40" y="654" width="9" height="3"/></g>
<text x="537" y="658" fill="#000" text-anchor="end" class="t">06:46</text>
<g stroke="#FFFF90" stroke-width="1"><line x1="543" y1="648.5" x2="543" y2="659.5"/><line x1="538" y1="654" x2="548.5" y2="654"/><line x1="539.3" y1="650.3" x2="546.7" y2="657.7"/><line x1="539.3" y1="657.7" x2="546.7" y2="650.3"/></g><circle cx="543" cy="654" r="3.2" fill="#FFFF00"/>
<text x="1161" y="658" fill="#000" text-anchor="end" class="t">18:41</text>
<rect x="1166.5" y="651.5" width="5" height="5" fill="none" stroke="#FFFF40" stroke-width="1" shape-rendering="crispEdges"/>
<g shape-rendering="crispEdges">
<rect x="1" y="668" width="1598" height="72" fill="#C0FFFF"/>
<rect x="1599" y="667" width="1" height="73" fill="#999"/>
<rect x="87" y="668" width="1" height="72" fill="#fff"/>
<rect x="88" y="668" width="1" height="72" fill="#999"/>
<rect x="204" y="668" width="1" height="72" fill="#fff"/>
<rect x="205" y="668" width="1" height="72" fill="#999"/>
<rect x="322" y="668" width="1" height="72" fill="#fff"/>
<rect x="323" y="668" width="1" height="72" fill="#999"/>
<rect x="440" y="668" width="1" height="72" fill="#fff"/>
<rect x="441" y="668" width="1" height="72" fill="#999"/>
<rect x="558" y="668" width="1" height="72" fill="#fff"/>
<rect x="559" y="668" width="1" height="72" fill="#999"/>
<rect x="676" y="668" width="1" height="72" fill="#fff"/>
<rect x="677" y="668" width="1" height="72" fill="#999"/>
<rect x="794" y="668" width="1" height="72" fill="#fff"/>
<rect x="795" y="668" width="1" height="72" fill="#999"/>
<rect x="912" y="668" width="1" height="72" fill="#fff"/>
<rect x="913" y="668" width="1" height="72" fill="#999"/>
</g>
<text x="8.8" y="685.3" fill="#000" class="t b">Sensor</text>
<text x="8.8" y="701.3" fill="#000" class="t b">MinWert</text>
<text x="8.8" y="717.3" fill="#000" class="t b">MaxWert</text>
<text x="8.8" y="733.3" fill="#000" class="t b">Durchschnitt</text>
<text x="94.6" y="685.3" fill="#000" class="t b">Temp. A.</text>
<text x="199.0" y="685.3" fill="#000" text-anchor="end" class="t b">°C</text>
<text x="100.4" y="701.3" fill="#000" class="t">23:57</text>
<text x="198.6" y="701.3" fill="#000" text-anchor="end" class="t">0.9</text>
<text x="100.4" y="717.3" fill="#000" class="t">15:00</text>
<text x="198.6" y="717.3" fill="#000" text-anchor="end" class="t">10.6</text>
<text x="100.4" y="733.3" fill="#000" class="t">(+ 0.42 )</text>
<text x="198.6" y="733.3" fill="#000" text-anchor="end" class="t">4.92</text>
<text x="212.6" y="685.3" fill="#000" class="t b">Feuchte A.</text>
<text x="317.0" y="685.3" fill="#000" text-anchor="end" class="t b">%</text>
<text x="218.4" y="701.3" fill="#000" class="t">14:39</text>
<text x="316.6" y="701.3" fill="#000" text-anchor="end" class="t">36</text>
<text x="218.4" y="717.3" fill="#000" class="t">07:24</text>
<text x="316.6" y="717.3" fill="#000" text-anchor="end" class="t">82</text>
<text x="316.6" y="733.3" fill="#000" text-anchor="end" class="t">64</text>
<text x="330.6" y="685.3" fill="#000" class="t b">Luftdruck</text>
<text x="435.0" y="685.3" fill="#000" text-anchor="end" class="t b">hPa</text>
<text x="336.4" y="701.3" fill="#000" class="t">01:15</text>
<text x="434.6" y="701.3" fill="#000" text-anchor="end" class="t">1015.3</text>
<text x="336.4" y="717.3" fill="#000" class="t">23:51</text>
<text x="434.6" y="717.3" fill="#000" text-anchor="end" class="t">1022.4</text>
<text x="330.6" y="733.3" fill="#000" class="t">^1.1hPa/h</text>
<text x="434.6" y="733.3" fill="#000" text-anchor="end" class="t">1018.0</text>
<text x="448.6" y="685.3" fill="#000" class="t b">Regen</text>
<text x="553.0" y="685.3" fill="#000" text-anchor="end" class="t b">l/m²</text>
<text x="454.4" y="717.3" fill="#000" class="t">00:00</text>
<text x="552.6" y="717.3" fill="#000" text-anchor="end" class="t">0.0</text>
<text x="448.6" y="733.3" fill="#000" class="t">Gesamt:</text>
<text x="552.6" y="733.3" fill="#000" text-anchor="end" class="t">0.0</text>
<text x="566.6" y="685.3" fill="#000" class="t b">Wind</text>
<text x="671.0" y="685.3" fill="#000" text-anchor="end" class="t b">km/h</text>
<text x="566.6" y="701.3" fill="#000" class="t">Ø 10 min.</text>
<text x="670.6" y="701.3" fill="#000" text-anchor="end" class="t">1.4</text>
<text x="572.4" y="717.3" fill="#000" class="t">12:09</text>
<text x="670.6" y="717.3" fill="#000" text-anchor="end" class="t">NO 23.7</text>
<text x="670.6" y="733.3" fill="#000" text-anchor="end" class="t">12.4</text>
<text x="684.6" y="685.3" fill="#000" class="t b">Windböen</text>
<text x="789.0" y="685.3" fill="#000" text-anchor="end" class="t b">km/h</text>
<text x="684.6" y="701.3" fill="#000" class="t">Ø 10 min.</text>
<text x="788.6" y="701.3" fill="#000" text-anchor="end" class="t">4.4</text>
<text x="690.4" y="717.3" fill="#000" class="t">14:21</text>
<text x="788.6" y="717.3" fill="#000" text-anchor="end" class="t">NO 35.4</text>
<text x="788.6" y="733.3" fill="#000" text-anchor="end" class="t">18.9</text>
<text x="802.6" y="685.3" fill="#000" class="t b">Solar</text>
<text x="907.0" y="685.3" fill="#000" text-anchor="end" class="t b">W/m²</text>
<text x="802.6" y="701.3" fill="#000" class="t">Elevation</text>
<text x="906.6" y="701.3" fill="#000" text-anchor="end" class="t">-40.568</text>
<text x="808.4" y="717.3" fill="#000" class="t">12:57</text>
<text x="906.6" y="717.3" fill="#000" text-anchor="end" class="t">682</text>
<text x="802.6" y="733.3" fill="#000" class="t">11:33 h</text>
<text x="906.6" y="733.3" fill="#000" text-anchor="end" class="t">200</text>
<text x="920" y="685.3" fill="#000" class="t b">UV</text>
<text x="1021" y="685.3" fill="#000" text-anchor="end" class="t b">UV-I</text>
<text x="926" y="701.3" fill="#000" class="t">00:00</text>
<text x="1022" y="701.3" fill="#000" text-anchor="end" class="t">0.0</text>
<text x="926" y="717.3" fill="#000" class="t">14:09</text>
<text x="1022" y="717.3" fill="#000" text-anchor="end" class="t">3.1</text>
<text x="1022" y="733.3" fill="#000" text-anchor="end" class="t">0.7</text>
</svg></body></html>
